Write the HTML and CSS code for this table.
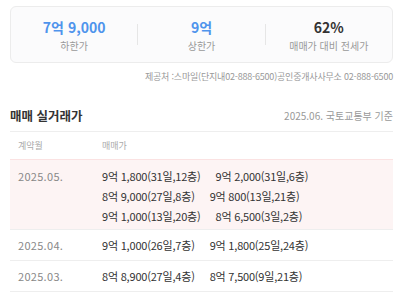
FILE: index.html
```html
<!DOCTYPE html>
<html lang="ko">
<head>
<meta charset="utf-8">
<link rel="stylesheet" href="styles.css">
</head>
<body>
<div class="page">
  <div class="summary">
    <div class="stat">
      <div class="stat-value blue">7억 9,000</div>
      <div class="stat-label">하한가</div>
    </div>
    <div class="divider"></div>
    <div class="stat">
      <div class="stat-value blue">9억</div>
      <div class="stat-label">상한가</div>
    </div>
    <div class="divider"></div>
    <div class="stat">
      <div class="stat-value dark">62%</div>
      <div class="stat-label">매매가 대비 전세가</div>
    </div>
  </div>
  <div class="source">제공처 :스마일(단지내02-888-6500)공인중개사사무소 02-888-6500</div>

  <div class="section-head">
    <div class="section-title">매매 실거래가</div>
    <div class="section-note">2025.06. 국토교통부 기준</div>
  </div>

  <div class="table">
    <div class="row head">
      <div class="col-date">계약월</div>
      <div class="col-price">매매가</div>
    </div>
    <div class="row hl">
      <div class="col-date">2025.05.</div>
      <div class="col-price">
        <span class="deal">9억 1,800(31일,12층)</span>
        <span class="deal">9억 2,000(31일,6층)</span>
        <span class="deal">8억 9,000(27일,8층)</span>
        <span class="deal">9억 800(13일,21층)</span>
        <span class="deal">9억 1,000(13일,20층)</span>
        <span class="deal">8억 6,500(3일,2층)</span>
      </div>
    </div>
    <div class="row">
      <div class="col-date">2025.04.</div>
      <div class="col-price">
        <span class="deal">9억 1,000(26일,7층)</span>
        <span class="deal">9억 1,800(25일,24층)</span>
      </div>
    </div>
    <div class="row">
      <div class="col-date">2025.03.</div>
      <div class="col-price">
        <span class="deal">8억 8,900(27일,4층)</span>
        <span class="deal">8억 7,500(9일,21층)</span>
      </div>
    </div>
  </div>
</div>
</body>
</html>
```

FILE: styles.css
```css
* { box-sizing: border-box; }
html, body { margin: 0; padding: 0; background: #fff; }
body {
  font-family: "Noto Sans CJK KR", "Noto Sans", sans-serif;
  color: #333;
}
.page { padding: 0 10px; }

.summary {
  margin-top: 6px;
  height: 57px;
  border: 1px solid #ececec;
  border-radius: 6px;
  background: #fbfbfc;
  display: flex;
  align-items: center;
}
.stat {
  flex: 1;
  text-align: center;
  padding-top: 2px;
}
.divider {
  width: 1px;
  height: 21px;
  background: #e6e6e6;
}
.stat-value {
  font-size: 14px;
  font-weight: 700;
  line-height: 20px;
}
.stat-value.blue { color: #4f94ec; }
.stat-value.dark { color: #333; }
.stat-label {
  font-size: 10px;
  line-height: 16px;
  color: #999;
  margin-top: 1px;
}

.source {
  margin-top: 7px;
  text-align: right;
  font-size: 9px;
  line-height: 14px;
  color: #999;
  letter-spacing: -0.2px;
}

.section-head {
  margin-top: 22px;
  display: flex;
  justify-content: space-between;
  align-items: center;
  height: 26px;
  padding-bottom: 6px;
  border-bottom: 1px solid #eee;
}
.section-title {
  font-size: 12.5px;
  font-weight: 700;
  color: #333;
  line-height: 20px;
}
.section-note {
  font-size: 10px;
  color: #999;
  line-height: 20px;
}

.row {
  display: flex;
  border-bottom: 1px solid #eee;
}
.row.head {
  height: 28px;
  line-height: 28px;
  font-size: 9px;
  color: #aaa;
  border-bottom: 1px solid #fbe2e2;
}
.row.hl {
  background: #fdf4f4;
  padding: 6px 0 3px;
}
.row:not(.head):not(.hl) {
  height: 31px;
  align-items: center;
}
.col-date {
  width: 92px;
  padding-left: 8px;
  flex: none;
}
.row:not(.head) .col-date {
  font-size: 11px;
  line-height: 20px;
  color: #888;
  letter-spacing: 0.3px;
}
.col-price {
  flex: 1;
  display: flex;
  flex-wrap: wrap;
  column-gap: 15px;
}
.deal {
  font-size: 11px;
  line-height: 20px;
  color: #333;
  letter-spacing: -0.2px;
}
```
